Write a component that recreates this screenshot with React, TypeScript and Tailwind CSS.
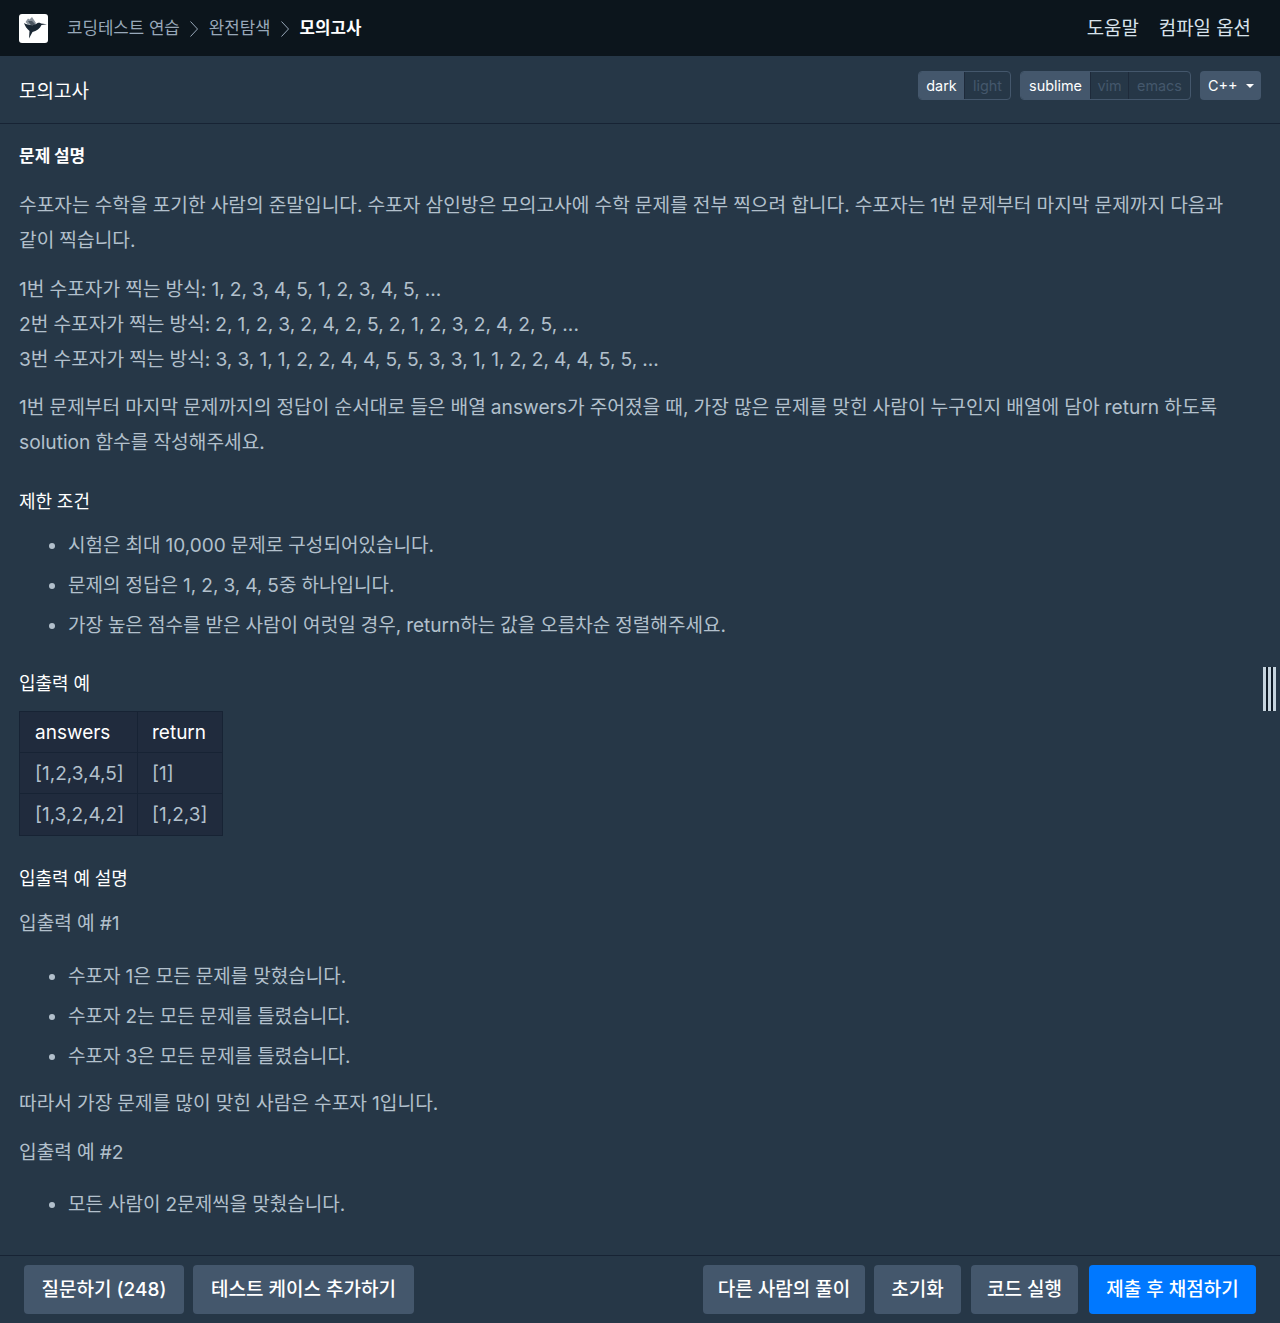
import React from 'react'

const font = { fontFamily: 'Inter, "Noto Sans CJK KR", sans-serif' }

const Chevron = () => (
  <svg width="10" height="18" viewBox="0 0 10 18" fill="none" stroke="#98a8b9" strokeWidth="1" className="mx-[9.5px]">
    <path d="M1.5 1.5 L8.5 9 L1.5 16.5" />
  </svg>
)

const Logo = () => (
  <div className="w-[29px] h-[29px] bg-white rounded-[3px] flex items-center justify-center">
    <svg width="29" height="29" viewBox="0 0 29 29">
      <path d="M6.5 8 L9 4.5 L10.5 5.5 L13 3 L17 9 L16 11 L9 10.5 Z" fill="#8a939c" />
      <path d="M9 7 L13 7 L17 11 L12 11.5 Z" fill="#4a5560" />
      <path d="M5 9 C8 10.8 12 11.5 15.5 11 L18.5 9 C20 8.3 21.5 8.8 22 9.6 L28 10.3 L22.5 11 C21 14.5 17.5 17 13.5 18 L10 24.5 L10.5 17 C8 15 6 12 5 9 Z" fill="#1a2733" />
    </svg>
  </div>
)

const Li = ({ children }: { children: React.ReactNode }) => (
  <li className="flex h-[40px] items-center text-[19.05px]">
    <span className="w-[6px] h-[6px] rounded-full bg-[#b2c0cc] ml-[30px] mr-[13px] shrink-0" />
    {children}
  </li>
)

const Heading = ({ children, className }: { children: React.ReactNode; className?: string }) => (
  <h5 className={`text-[18px] leading-[26px] text-white ${className}`}>{children}</h5>
)

const FootButton = ({ children, className }: { children: React.ReactNode; className?: string }) => (
  <button className={`h-[49px] pt-[1px] rounded-[4px] bg-[#44576c] text-white text-[19px] font-medium whitespace-nowrap ${className}`}>
    {children}
  </button>
)

const Seg = ({ children, on, last, className }: { children: React.ReactNode; on?: boolean; last?: boolean; className?: string }) => (
  <div className={`h-full flex items-center justify-center pt-[1px] ${on ? 'bg-[#44576c] text-white' : 'text-[#44576c]'} ${last ? '' : 'border-r border-[#1e2a3a]'} ${className}`}>
    {children}
  </div>
)

export default function App() {
  return (
    <div style={font} className="h-screen flex flex-col bg-[#263747] text-[#b2c0cc] overflow-hidden relative">
      <header className="h-[56px] shrink-0 bg-[#0c151c] flex items-center pl-[19px] pr-[29px]">
        <Logo />
        <div className="flex items-center ml-[19px] pt-[1px] text-[16.8px] text-[#98a8b9]">
          <span>코딩테스트 연습</span>
          <Chevron />
          <span>완전탐색</span>
          <Chevron />
          <span className="text-white font-bold">모의고사</span>
        </div>
        <div className="ml-auto flex gap-[20px] pt-[2px] text-[18.9px] text-[#d7e2eb]">
          <span>도움말</span>
          <span>컴파일 옵션</span>
        </div>
      </header>

      <div className="h-[68px] shrink-0 border-b border-[#172334] flex items-center justify-between pl-[19px] pr-[19px]">
        <h4 className="text-[19px] text-white pt-[5px]">모의고사</h4>
        <div className="flex gap-[9px] text-[14.4px] h-[29px] -mt-[9px]">
          <div className="flex h-full rounded-[4px] border border-[#44576c] overflow-hidden">
            <Seg on className="w-[46px]">dark</Seg>
            <Seg last className="w-[45px]">light</Seg>
          </div>
          <div className="flex h-full rounded-[4px] border border-[#44576c] overflow-hidden">
            <Seg on className="w-[70px]">sublime</Seg>
            <Seg className="w-[38px]">vim</Seg>
            <Seg last className="w-[61px]">emacs</Seg>
          </div>
          <div className="flex items-center w-[61px] h-full rounded-[4px] bg-[#44576c] text-white pl-[8px] pt-[1px]">
            C++
            <span className="ml-[8px] w-0 h-0 border-x-[4px] border-x-transparent border-t-[4px] border-t-white" />
          </div>
        </div>
      </div>

      <div className="flex-1 overflow-hidden pl-[19px] pr-[40px] pt-[19px] text-[19.2px] [word-spacing:-0.35px]">
        <Heading className="font-bold !text-[17px]">문제 설명</Heading>
        <p className="leading-[35px] mt-[19px]">
          수포자는 수학을 포기한 사람의 준말입니다. 수포자 삼인방은 모의고사에 수학 문제를 전부 찍으려 합니다. 수포자는 1번 문제부터 마지막 문제까지 다음과 같이 찍습니다.
        </p>
        <p className="leading-[35px] mt-[14px]">
          1번 수포자가 찍는 방식: 1, 2, 3, 4, 5, 1, 2, 3, 4, 5, ...<br />
          2번 수포자가 찍는 방식: 2, 1, 2, 3, 2, 4, 2, 5, 2, 1, 2, 3, 2, 4, 2, 5, ...<br />
          3번 수포자가 찍는 방식: 3, 3, 1, 1, 2, 2, 4, 4, 5, 5, 3, 3, 1, 1, 2, 2, 4, 4, 5, 5, ...
        </p>
        <p className="leading-[35px] mt-[13px]">
          1번 문제부터 마지막 문제까지의 정답이 순서대로 들은 배열 answers가 주어졌을 때, 가장 많은 문제를 맞힌 사람이 누구인지 배열에 담아 return 하도록 solution 함수를 작성해주세요.
        </p>
        <Heading className="mt-[29px]">제한 조건</Heading>
        <ul className="mt-[11px]">
          <Li>시험은 최대 10,000 문제로 구성되어있습니다.</Li>
          <Li>문제의 정답은 1, 2, 3, 4, 5중 하나입니다.</Li>
          <Li>가장 높은 점수를 받은 사람이 여럿일 경우, return하는 값을 오름차순 정렬해주세요.</Li>
        </ul>
        <Heading className="mt-[25px]">입출력 예</Heading>
        <table className="mt-[14px] bg-[#202b3d] border border-[#172334] border-collapse table-fixed w-[203px] text-[19px]">
          <thead>
            <tr className="h-[41px] text-white">
              <td className="border border-[#172334] pl-[15px] pt-[3px] w-[118px]">answers</td>
              <td className="border border-[#172334] pl-[14px] pt-[3px] w-[85px]">return</td>
            </tr>
          </thead>
          <tbody>
            <tr className="h-[41px]">
              <td className="border border-[#172334] pl-[15px] pt-[3px]">[1,2,3,4,5]</td>
              <td className="border border-[#172334] pl-[14px] pt-[3px]">[1]</td>
            </tr>
            <tr className="h-[42px]">
              <td className="border border-[#172334] pl-[15px] pt-[2px]">[1,3,2,4,2]</td>
              <td className="border border-[#172334] pl-[14px] pt-[2px]">[1,2,3]</td>
            </tr>
          </tbody>
        </table>
        <Heading className="mt-[30px]">입출력 예 설명</Heading>
        <p className="leading-[35px] mt-[14px]">입출력 예 #1</p>
        <ul className="mt-[16px]">
          <Li>수포자 1은 모든 문제를 맞혔습니다.</Li>
          <Li>수포자 2는 모든 문제를 틀렸습니다.</Li>
          <Li>수포자 3은 모든 문제를 틀렸습니다.</Li>
        </ul>
        <p className="leading-[35px] mt-[9px]">따라서 가장 문제를 많이 맞힌 사람은 수포자 1입니다.</p>
        <p className="leading-[35px] mt-[14px]">입출력 예 #2</p>
        <ul className="mt-[15px]">
          <Li>모든 사람이 2문제씩을 맞췄습니다.</Li>
        </ul>
      </div>

      <div className="absolute right-[4px] top-[667px] h-[44px] w-[13px] flex justify-between bg-[#0f1a26]">
        <span className="w-[3px] h-full bg-[#c5d3dd]" />
        <span className="w-[3px] h-full bg-[#c5d3dd]" />
        <span className="w-[3px] h-full bg-[#c5d3dd]" />
      </div>

      <footer className="h-[68px] shrink-0 border-t border-[#172334] flex items-center pl-[24px] pr-[24px] gap-[9px]">
        <FootButton className="w-[160px]">질문하기 (248)</FootButton>
        <FootButton className="w-[221px]">테스트 케이스 추가하기</FootButton>
        <FootButton className="w-[162px] ml-auto">다른 사람의 풀이</FootButton>
        <FootButton className="w-[87px]">초기화</FootButton>
        <FootButton className="w-[107px] ml-[1px]">코드 실행</FootButton>
        <FootButton className="w-[167px] ml-[2px] !bg-[#0078ff]">제출 후 채점하기</FootButton>
      </footer>
    </div>
  )
}
